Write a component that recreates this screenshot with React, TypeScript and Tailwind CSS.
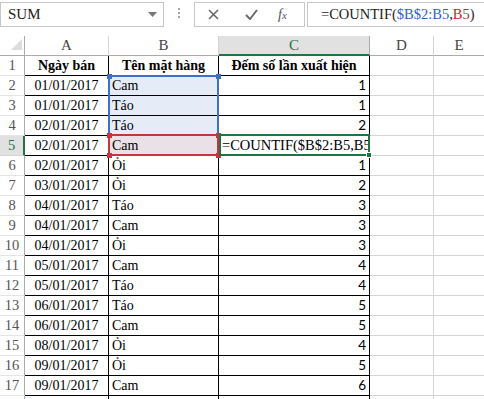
import React from "react";

const serif = { fontFamily: '"Liberation Serif", "Times New Roman", serif' };
const sans = { fontFamily: 'Lato, "Liberation Sans", sans-serif' };

const FORMULA = "=COUNTIF($B$2:B5,B5";

const data: [string, string, string][] = [
  ["01/01/2017", "Cam", "1"],
  ["01/01/2017", "Táo", "1"],
  ["02/01/2017", "Táo", "2"],
  ["02/01/2017", "Cam", FORMULA],
  ["02/01/2017", "Ỏi", "1"],
  ["03/01/2017", "Ỏi", "2"],
  ["04/01/2017", "Táo", "3"],
  ["04/01/2017", "Cam", "3"],
  ["04/01/2017", "Ỏi", "3"],
  ["05/01/2017", "Cam", "4"],
  ["05/01/2017", "Táo", "4"],
  ["06/01/2017", "Táo", "5"],
  ["06/01/2017", "Cam", "5"],
  ["08/01/2017", "Ỏi", "4"],
  ["09/01/2017", "Ỏi", "5"],
  ["09/01/2017", "Cam", "6"],
];

function Toolbar() {
  return (
    <div className="flex h-[28px] items-start pt-[2px]">
      <div className="flex h-[25px] w-[164px] items-center justify-between border border-[#c6c6c6] bg-white pl-[7px] pr-[6px]">
        <span className="text-[15px] text-[#222]" style={serif}>
          SUM
        </span>
        <svg width="9" height="5" viewBox="0 0 9 5">
          <path d="M0 0h9L4.5 5z" fill="#777" />
        </svg>
      </div>
      <div className="flex w-[30px] flex-col items-center gap-[2px] pt-[6px]">
        <span className="h-[2px] w-[2px] bg-[#a8a8a8]" />
        <span className="h-[2px] w-[2px] bg-[#a8a8a8]" />
        <span className="h-[2px] w-[2px] bg-[#a8a8a8]" />
      </div>
      <div className="flex h-[25px] w-[111px] items-center border border-[#c6c6c6] bg-white">
        <svg className="ml-[13px]" width="11" height="11" viewBox="0 0 11 11">
          <path d="M1 1l9 9M10 1l-9 9" stroke="#6a6a6a" strokeWidth="1.6" />
        </svg>
        <svg className="ml-[26px]" width="13" height="11" viewBox="0 0 13 11">
          <path d="M1 6l4 4 7-9" stroke="#6a6a6a" strokeWidth="2" fill="none" />
        </svg>
        <span className="ml-[20px] text-[14px] italic text-[#555]" style={serif}>
          f<span className="text-[11px]">x</span>
        </span>
      </div>
      <div className="ml-[2px] flex h-[25px] flex-1 items-center border border-r-0 border-[#c6c6c6] bg-white pl-[13px]">
        <span className="whitespace-nowrap text-[14.5px] text-[#222]" style={serif}>
          =COUNTIF(<span className="text-[#2f5fd0]">$B$2:B5</span>,
          <span className="text-[#c4282b]">B5</span>)
        </span>
      </div>
    </div>
  );
}

function ColHeaders() {
  return (
    <div className="mt-[8px] flex h-[20px] text-[15px] text-[#444]" style={serif}>
      <div className="relative w-[25px] border-r border-b border-[#ababab]">
        <svg className="absolute left-[11px] top-[3px]" width="11" height="11" viewBox="0 0 11 11">
          <path d="M11 0v11H0z" fill="#dcdcdc" />
        </svg>
      </div>
      <div className="flex w-[84px] items-center justify-center border-r border-b border-[#d4d4d4] border-b-[#ababab]">A</div>
      <div className="flex w-[110px] items-center justify-center border-r border-b border-[#d4d4d4] border-b-[#ababab]">B</div>
      <div className="flex w-[151px] items-center justify-center border-r border-[#ababab] border-b-2 border-b-[#217346] bg-[#e1e1e1] text-[#217346]">
        C
      </div>
      <div className="flex w-[64px] items-center justify-center border-r border-b border-[#d4d4d4] border-b-[#ababab]">D</div>
      <div className="flex flex-1 items-center justify-center border-b border-[#ababab]">E</div>
    </div>
  );
}

function Row({ n, a, b, c, bold }: { n: number; a: string; b: string; c: string; bold?: boolean }) {
  const active = n === 5;
  return (
    <div className="flex h-[20px] text-[14px] text-black" style={serif}>
      <div
        className={
          active
            ? "flex w-[25px] items-center justify-center border-r-2 border-b border-r-[#217346] border-b-[#d4d4d4] bg-[#e1e1e1] text-[14.5px] text-[#217346]"
            : "flex w-[25px] items-center justify-center border-r border-b border-r-[#ababab] border-b-[#e4e4e4] text-[14.5px] text-[#555]"
        }
      >
        {n}
      </div>
      <div
        className={
          "flex w-[84px] items-center justify-center border-r border-b border-black " + (bold ? "font-bold" : "")
        }
      >
        {a}
      </div>
      <div
        className={
          "flex w-[110px] items-center overflow-hidden whitespace-nowrap border-r border-b border-black " +
          (bold ? "justify-center font-bold" : "pl-[3px]") +
          (n >= 2 && n <= 4 ? " bg-[#e6ecf7]" : "") +
          (active ? " bg-[#eae0e7]" : "")
        }
      >
        {b}
      </div>
      <div
        className={
          "flex w-[151px] items-center overflow-hidden whitespace-nowrap border-r border-b border-black " +
          (bold ? "justify-center font-bold" : active ? "pl-[3px] text-[14.5px]" : "justify-end pr-[3px] text-[13.5px]")
        }
        style={!bold && !active ? sans : undefined}
      >
        {c}
      </div>
      <div className="w-[64px] border-r border-b border-[#d4d4d4]" />
      <div className="flex-1 border-b border-[#d4d4d4]" />
    </div>
  );
}

function Handle({ x, y, color }: { x: number; y: number; color: string }) {
  return (
    <div
      className="absolute h-[5px] w-[5px]"
      style={{ left: x - 2, top: y - 2, backgroundColor: color }}
    />
  );
}

export default function App() {
  return (
    <div className="relative h-[399px] w-[484px] overflow-hidden bg-white">
      <Toolbar />
      <ColHeaders />
      <Row n={1} a="Ngày bán" b="Tên mặt hàng" c="Đếm số lần xuất hiện" bold />
      {data.map((r, i) => (
        <Row key={i} n={i + 2} a={r[0]} b={r[1]} c={r[2]} />
      ))}
      <div className="flex h-[20px]">
        <div className="w-[25px] border-r border-[#ababab]" />
        <div className="w-[84px] border-r border-black" />
        <div className="w-[110px] border-r border-black" />
        <div className="w-[151px] border-r border-black" />
        <div className="w-[64px] border-r border-[#d4d4d4]" />
      </div>

      {/* blue range B2:B4 */}
      <div className="absolute left-[108px] top-[75px] h-[61px] w-[111px] border-2 border-[#3f6fc6]" />
      <Handle x={109} y={76} color="#3f6fc6" />
      <Handle x={218} y={76} color="#3f6fc6" />
      {/* red range B5 */}
      <div className="absolute left-[108px] top-[134px] h-[22px] w-[111px] border-2 border-[#c5353b]" />
      <Handle x={109} y={135} color="#c5353b" />
      <Handle x={218} y={135} color="#c5353b" />
      <Handle x={109} y={155} color="#c5353b" />
      <Handle x={218} y={155} color="#c5353b" />
      {/* active cell C5 */}
      <div className="absolute left-[219px] top-[134px] h-[22px] w-[151px] border-2 border-[#217346]" />
      <div className="absolute left-[366px] top-[152px] h-[6px] w-[6px] border border-white bg-[#217346]" />
    </div>
  );
}
